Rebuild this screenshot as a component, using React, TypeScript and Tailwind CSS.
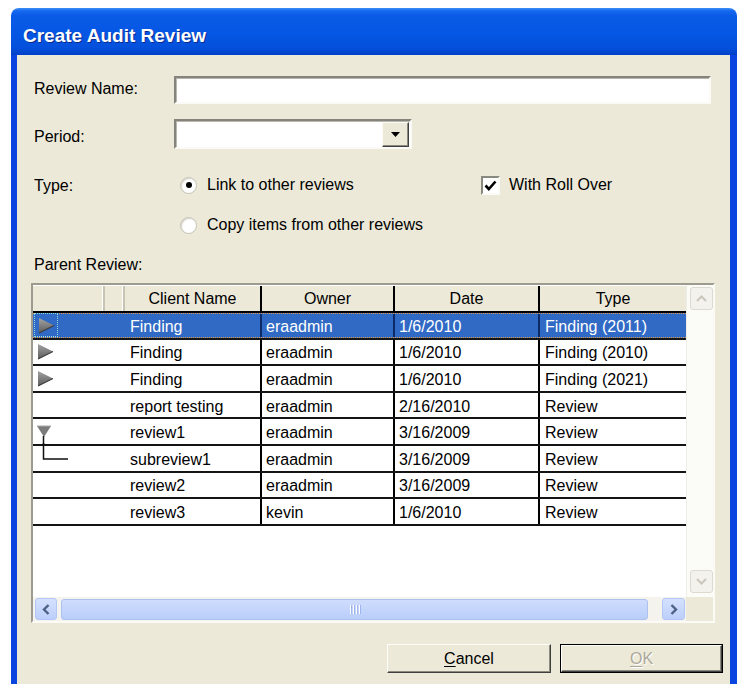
import React from "react";

type Row = {
  icon: "right" | "down" | "branch" | null;
  name: string;
  owner: string;
  date: string;
  type: string;
  selected?: boolean;
};

const rows: Row[] = [
  { icon: "right", name: "Finding", owner: "eraadmin", date: "1/6/2010", type: "Finding (2011)", selected: true },
  { icon: "right", name: "Finding", owner: "eraadmin", date: "1/6/2010", type: "Finding (2010)" },
  { icon: "right", name: "Finding", owner: "eraadmin", date: "1/6/2010", type: "Finding (2021)" },
  { icon: null, name: "report testing", owner: "eraadmin", date: "2/16/2010", type: "Review" },
  { icon: "down", name: "review1", owner: "eraadmin", date: "3/16/2009", type: "Review" },
  { icon: "branch", name: "subreview1", owner: "eraadmin", date: "3/16/2009", type: "Review" },
  { icon: null, name: "review2", owner: "eraadmin", date: "3/16/2009", type: "Review" },
  { icon: null, name: "review3", owner: "kevin", date: "1/6/2010", type: "Review" },
];

function TreeIcon({ kind }: { kind: Row["icon"] }) {
  if (kind === "right") {
    return (
      <svg width="24" height="27" viewBox="0 0 24 27" className="block overflow-visible">
        <defs>
          <linearGradient id="tri-r" x1="0" y1="0" x2="0" y2="1">
            <stop offset="0" stopColor="#a3a3a3" />
            <stop offset="1" stopColor="#5c5c5c" />
          </linearGradient>
        </defs>
        <polygon points="5,6 20,13.5 5,21" fill="url(#tri-r)" />
        <polyline points="5,21 20,13.5" fill="none" stroke="#3c3c3c" strokeWidth="1.2" />
      </svg>
    );
  }
  if (kind === "down") {
    return (
      <svg width="40" height="27" viewBox="0 0 40 27" className="block overflow-visible">
        <polygon points="4,8 18,8 11,19" fill="#7c7c7c" />
        <polyline points="4,8 18,8" fill="none" stroke="#a8a8a8" strokeWidth="1" />
        <line x1="10.5" y1="18" x2="10.5" y2="28" stroke="#111" strokeWidth="1.5" />
      </svg>
    );
  }
  if (kind === "branch") {
    return (
      <svg width="40" height="27" viewBox="0 0 40 27" className="block overflow-visible">
        <polyline points="10.5,-2 10.5,14 35,14" fill="none" stroke="#111" strokeWidth="1.5" />
      </svg>
    );
  }
  return null;
}

function ChevronV({ up, color }: { up: boolean; color: string }) {
  return (
    <svg width="11" height="7" viewBox="0 0 11 7">
      <polyline
        points={up ? "1,6 5.5,1.5 10,6" : "1,1 5.5,5.5 10,1"}
        fill="none"
        stroke={color}
        strokeWidth="2"
      />
    </svg>
  );
}

function ChevronH({ left }: { left: boolean }) {
  return (
    <svg width="8" height="11" viewBox="0 0 8 11">
      <polyline
        points={left ? "6.5,1 2,5.5 6.5,10" : "1.5,1 6,5.5 1.5,10"}
        fill="none"
        stroke="#4d6185"
        strokeWidth="2.4"
      />
    </svg>
  );
}

function DataRow({ row }: { row: Row }) {
  const text = row.selected ? "text-white" : "text-black";
  const line = row.selected ? "border-[#0c2a66]" : "border-black";
  const inner = (
    <>
      <div className="w-[92px] h-full flex items-center">
        {row.selected ? (
          <div className="ml-[1px] w-[24px] h-[24px] border border-dotted border-[#8fdcdc] flex items-center">
            <div className="-ml-[1px]">
              <TreeIcon kind={row.icon} />
            </div>
          </div>
        ) : (
          <TreeIcon kind={row.icon} />
        )}
      </div>
      <div className={`w-[137px] h-full flex items-center pl-[5px] pt-[3px] border-r-2 ${line} ${text}`}>
        {row.name}
      </div>
      <div className={`w-[133px] h-full flex items-center pl-[4px] pt-[3px] border-r-2 ${line} ${text}`}>
        {row.owner}
      </div>
      <div className={`w-[145px] h-full flex items-center pl-[4px] pt-[3px] border-r-2 ${line} ${text}`}>
        {row.date}
      </div>
      <div className={`w-[146px] h-full flex items-center pl-[5px] pt-[3px] ${text}`}>{row.type}</div>
    </>
  );
  return (
    <div className={`h-[26.6px] w-[653px] border-b-2 border-[#141414] ${row.selected ? "bg-[#316ac5]" : "bg-white"}`}>
      {row.selected ? (
        <div className="h-full flex border-y border-dotted border-[#e39a52]">{inner}</div>
      ) : (
        <div className="h-full flex">{inner}</div>
      )}
    </div>
  );
}

function Grid() {
  return (
    <div className="mt-[6px] w-[684px] h-[340px] border-2 border-t-[#9d9b90] border-l-[#9d9b90] border-r-[#fbfaf6] border-b-[#fbfaf6] flex">
      {/* main list column */}
      <div className="w-[653px] flex flex-col">
        {/* header */}
        <div className="h-[28px] flex bg-[#ece9d8] border-t border-white border-b-2 border-b-black">
          <div className="w-[72px] h-full border-r-2 border-r-[#c7c4b4] shadow-[inset_-1px_0_0_#ffffff]" />
          <div className="w-[20px] h-full border-r-2 border-r-[#c7c4b4] shadow-[inset_-1px_0_0_#ffffff]" />
          <div className="w-[137px] h-full flex items-center justify-center pt-[1px] border-r-2 border-black">Client Name</div>
          <div className="w-[133px] h-full flex items-center justify-center pt-[1px] border-r-2 border-black">Owner</div>
          <div className="w-[145px] h-full flex items-center justify-center pt-[1px] border-r-2 border-black">Date</div>
          <div className="w-[146px] h-full flex items-center justify-center pt-[1px]">Type</div>
        </div>
        {/* rows */}
        <div className="flex-1 bg-white overflow-hidden">
          {rows.map((r, i) => (
            <DataRow key={i} row={r} />
          ))}
        </div>
        {/* horizontal scrollbar */}
        <div className="h-[24px] flex items-center bg-[#f4f3ee] pl-[2px]">
          <div className="w-[22px] h-[22px] rounded-[3px] border border-[#b3c6f5] bg-[linear-gradient(to_bottom,#d5e1fd,#bccffa)] flex items-center justify-center">
            <ChevronH left />
          </div>
          <div className="ml-[4px] w-[587px] h-[21px] rounded-[3px] border border-[#adc1f1] bg-[linear-gradient(to_bottom,#cfdcfd,#c2d4fb_60%,#b9cdf9)] flex items-center justify-center">
            <div className="flex gap-[2px]">
              <div className="w-[1px] h-[9px] bg-white shadow-[1px_0_0_#9db5ec]" />
              <div className="w-[1px] h-[9px] bg-white shadow-[1px_0_0_#9db5ec]" />
              <div className="w-[1px] h-[9px] bg-white shadow-[1px_0_0_#9db5ec]" />
              <div className="w-[1px] h-[9px] bg-white shadow-[1px_0_0_#9db5ec]" />
            </div>
          </div>
          <div className="ml-[14px] w-[23px] h-[22px] rounded-[3px] border border-[#b3c6f5] bg-[linear-gradient(to_bottom,#d5e1fd,#bccffa)] flex items-center justify-center">
            <ChevronH left={false} />
          </div>
        </div>
      </div>
      {/* vertical scrollbar (disabled) + corner */}
      <div className="flex-1 flex flex-col">
        <div className="flex-1 bg-[#fbfbf8] border-l border-[#eeede6] flex flex-col justify-between items-center pt-[2px] pb-[4px] pl-[2px]">
          <div className="w-[23px] h-[23px] rounded-[3px] border border-[#dddbd0] bg-[#f3f2ed] flex items-center justify-center">
            <ChevronV up color="#c9c7bb" />
          </div>
          <div className="w-[23px] h-[23px] rounded-[3px] border border-[#dddbd0] bg-[#f3f2ed] flex items-center justify-center">
            <ChevronV up={false} color="#c9c7bb" />
          </div>
        </div>
        <div className="h-[24px] bg-[#ece9d8]" />
      </div>
    </div>
  );
}

function Radio({ checked }: { checked?: boolean }) {
  return (
    <div className="w-[17px] h-[17px] rounded-full bg-white border border-[#c4c2b5] shadow-[inset_1px_1px_1px_#d6d4c8] flex items-center justify-center">
      {checked && <div className="w-[6px] h-[6px] rounded-full bg-black" />}
    </div>
  );
}

export default function App() {
  return (
    <div className="w-[740px] h-[684px] bg-white overflow-hidden pt-[8px] pl-[11px] pr-[3px] font-['Liberation_Sans',Arial,sans-serif] text-[16px] leading-[18px] text-black">
      <div className="h-[676px] flex flex-col rounded-t-[8px] overflow-hidden">
        {/* title bar */}
        <div className="h-[47px] shrink-0 pl-[12px] pt-[8px] flex items-center bg-[linear-gradient(to_bottom,#3d8ef8_0px,#1567ef_3px,#0a5ae6_8px,#0557e3_26px,#0350dc_40px,#0240c8_47px)]">
          <span className="font-bold text-[19px] text-white [text-shadow:1px_1px_0_#0b2a8e]">Create Audit Review</span>
        </div>
        {/* frame + client area */}
        <div className="flex-1 flex bg-[#0a45e0] pl-[6px] pr-[7px]">
          <div className="flex-1 bg-[#ece9d8] pl-[14px] flex flex-col">
            {/* Review Name */}
            <div className="mt-[21px] h-[28px] flex items-center">
              <div className="w-[143px] pl-[3px] pb-[3px]">Review Name:</div>
              <div className="w-[537px] h-[28px] bg-white border-2 border-t-[#85847c] border-l-[#85847c] border-r-[#fbfaf6] border-b-[#fbfaf6] shadow-[inset_1px_1px_0_#b9b7ac]" />
            </div>
            {/* Period */}
            <div className="mt-[15px] h-[30px] flex items-center">
              <div className="w-[143px] pl-[3px] pt-[6px]">Period:</div>
              <div className="w-[238px] h-[30px] bg-white border-2 border-t-[#85847c] border-l-[#85847c] border-r-[#fbfaf6] border-b-[#fbfaf6] shadow-[inset_1px_1px_0_#b9b7ac] flex justify-end items-center pr-[1px]">
                <div className="w-[27px] h-[25px] bg-[#ece9d8] border border-t-[#fbfaf6] border-l-[#fbfaf6] border-r-[#404040] border-b-[#404040] shadow-[inset_-1px_-1px_0_#8d8b80] flex items-center justify-center">
                  <svg width="9" height="5" viewBox="0 0 9 5">
                    <polygon points="0,0 9,0 4.5,5" fill="#000" />
                  </svg>
                </div>
              </div>
            </div>
            {/* Type */}
            <div className="mt-[24px] h-[24px] flex items-center">
              <div className="w-[149px] pl-[3px] pt-[2px]">Type:</div>
              <div className="w-[301px] flex items-center gap-[10px]">
                <Radio checked />
                <span>Link to other reviews</span>
              </div>
              <div className="flex items-center gap-[9px]">
                <div className="w-[19px] h-[19px] bg-white border-2 border-t-[#8a897f] border-l-[#8a897f] border-r-[#fbfaf6] border-b-[#fbfaf6] flex items-center justify-center">
                  <svg width="13" height="11" viewBox="0 0 13 11">
                    <polyline points="1.5,5.5 4.8,9 11.5,1.5" fill="none" stroke="#000" strokeWidth="2.6" />
                  </svg>
                </div>
                <span>With Roll Over</span>
              </div>
            </div>
            <div className="mt-[16px] h-[24px] flex items-center pl-[149px]">
              <div className="flex items-center gap-[10px]">
                <Radio />
                <span>Copy items from other reviews</span>
              </div>
            </div>
            {/* Parent Review */}
            <div className="mt-[16px] h-[24px] flex items-center pl-[3px]">Parent Review:</div>
            <Grid />
            {/* buttons */}
            <div className="mt-[21px] h-[29px] flex justify-end gap-[9px] pr-[7px]">
              <button className="w-[164px] h-[29px] bg-[#ece9d8] border border-t-[#fdfdfb] border-l-[#fdfdfb] border-r-[#404040] border-b-[#404040] shadow-[inset_-1px_-1px_0_#8d8b80] flex items-center justify-center">
                <span>
                  <span className="underline underline-offset-2">C</span>ancel
                </span>
              </button>
              <button className="w-[163px] h-[29px] bg-[#ece9d8] border border-black flex">
                <div className="flex-1 border border-t-[#fdfdfb] border-l-[#fdfdfb] border-r-[#404040] border-b-[#404040] shadow-[inset_-1px_-1px_0_#8d8b80] flex items-center justify-center text-[#aca899] [text-shadow:1px_1px_0_#ffffff]">
                  <span>
                    <span className="underline underline-offset-2">O</span>K
                  </span>
                </div>
              </button>
            </div>
          </div>
        </div>
      </div>
    </div>
  );
}
